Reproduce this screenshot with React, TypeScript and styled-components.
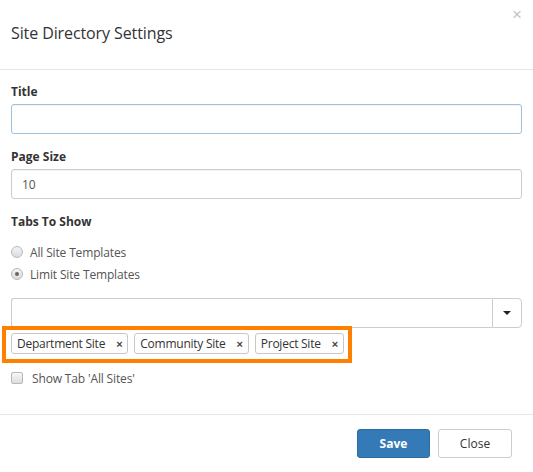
import React from "react";
import styled, { createGlobalStyle } from "styled-components";

const GlobalStyle = createGlobalStyle`
  html, body {
    margin: 0;
    padding: 0;
    background: #fff;
  }
  body {
    font-family: "Open Sans", "Liberation Sans", Arial, sans-serif;
    font-size: 12px;
    color: #333;
  }
  * {
    box-sizing: border-box;
  }
`

const Modal = styled.div`
  width: 533px;
  height: 472px;
  background: #fff;
  display: flex;
  flex-direction: column;
`

const Header = styled.div`
  position: relative;
  height: 70px;
  border-bottom: 1px solid #e5e5e5;
  display: flex;
  align-items: center;
  padding: 0 11px 3px;
`

const Heading = styled.h4`
  margin: 0;
  font-size: 16px;
  font-weight: 400;
  letter-spacing: -0.1px;
  color: #333;
`

const CloseX = styled.button`
  position: absolute;
  top: 6px;
  right: 11px;
  border: 0;
  background: none;
  padding: 0;
  font-size: 17px;
  line-height: 17px;
  color: #c4c4c4;
  font-family: "Liberation Sans", Arial, sans-serif;
  cursor: pointer;
`

const Body = styled.div`
  padding: 13px 11px 0 11px;
  height: 345px;
  border-bottom: 1px solid #e5e5e5;
`

const Field = styled.div`
  margin-bottom: 14px;
`

const Label = styled.label`
  display: block;
  font-weight: 700;
  font-size: 12px;
  line-height: 17px;
  margin-bottom: 4px;
  color: #333;
`

const TextInput = styled.input<{ $focused?: boolean }>`
  display: block;
  width: 100%;
  height: 30px;
  padding: 4px 10px;
  font-family: inherit;
  font-size: 12px;
  color: #555;
  border: 1px solid ${(p) => (p.$focused ? "#9fbfdc" : "#ccc")};
  border-radius: 3px;
  box-shadow: inset 0 1px 1px rgba(0, 0, 0, 0.05);
  outline: none;
`

const Options = styled.div`
  display: flex;
  flex-direction: column;
  margin-top: 11px;
`

const OptionRow = styled.label`
  display: flex;
  align-items: center;
  height: 22px;
  gap: 7px;
  color: #555;
  font-size: 12px;
  letter-spacing: -0.15px;
`

const Radio = styled.span<{ $checked?: boolean }>`
  width: 12px;
  height: 12px;
  border-radius: 50%;
  border: 1px solid #b8b8b8;
  background: linear-gradient(#f4f4f4, #dcdcdc);
  display: flex;
  align-items: center;
  justify-content: center;

  &::after {
    content: "";
    width: 4px;
    height: 4px;
    border-radius: 50%;
    background: ${(p) => (p.$checked ? "#666" : "transparent")};
  }
`

const Checkbox = styled.span`
  width: 12px;
  height: 12px;
  border-radius: 2px;
  border: 1px solid #b8b8b8;
  background: linear-gradient(#f6f6f6, #dedede);
`

const SelectRow = styled.div`
  display: flex;
  height: 30px;
  margin-top: 13px;
`

const SelectInput = styled.div`
  flex: 1;
  border: 1px solid #ccc;
  border-right: 0;
  border-radius: 3px 0 0 3px;
`

const SelectButton = styled.div`
  width: 30px;
  border: 1px solid #ccc;
  border-radius: 0 4px 4px 0;
  display: flex;
  align-items: center;
  justify-content: center;

  &::after {
    content: "";
    border-left: 4px solid transparent;
    border-right: 4px solid transparent;
    border-top: 4px solid #222;
  }
`

const Highlight = styled.div`
  display: inline-flex;
  gap: 6px;
  margin: -2px 0 0 -9px;
  padding: 3px 4px 5px 5px;
  border: 4px solid #ff8000;
`

const Tag = styled.span`
  display: inline-flex;
  align-items: center;
  height: 21px;
  padding: 0 5px;
  gap: 11px;
  border: 1px solid #c8c8c8;
  border-radius: 3px;
  font-size: 12px;
  letter-spacing: -0.25px;
  color: #333;
  background: #fff;
`

const TagRemove = styled.span`
  font-family: "Liberation Sans", Arial, sans-serif;
  font-size: 11px;
  font-weight: 700;
  color: #444;
`

const CheckRow = styled(OptionRow)`
  margin-top: 4px;
  gap: 9px;
`

const Footer = styled.div`
  display: flex;
  justify-content: flex-end;
  gap: 8px;
  padding: 14px 21px 0 0;
`

const Button = styled.button<{ $primary?: boolean }>`
  height: 29px;
  width: ${(p) => (p.$primary ? "73px" : "74px")};
  font-family: inherit;
  font-size: 12px;
  font-weight: ${(p) => (p.$primary ? 700 : 400)};
  border-radius: 3px;
  border: 1px solid ${(p) => (p.$primary ? "#2e6da4" : "#ccc")};
  background: ${(p) => (p.$primary ? "#337ab7" : "#fff")};
  color: ${(p) => (p.$primary ? "#fff" : "#333")};
  cursor: pointer;
`

const tags = ["Department Site", "Community Site", "Project Site"];

export default function App() {
  return (
    <>
      <GlobalStyle />
      <Modal>
        <Header>
          <Heading>Site Directory Settings</Heading>
          <CloseX>×</CloseX>
        </Header>
        <Body>
          <Field>
            <Label>Title</Label>
            <TextInput $focused defaultValue="" />
          </Field>
          <Field>
            <Label>Page Size</Label>
            <TextInput defaultValue="10" />
          </Field>
          <Label>Tabs To Show</Label>
          <Options>
            <OptionRow>
              <Radio />
              All Site Templates
            </OptionRow>
            <OptionRow>
              <Radio $checked />
              Limit Site Templates
            </OptionRow>
          </Options>
          <SelectRow>
            <SelectInput />
            <SelectButton />
          </SelectRow>
          <Highlight>
            {tags.map((t) => (
              <Tag key={t}>
                {t}
                <TagRemove>×</TagRemove>
              </Tag>
            ))}
          </Highlight>
          <CheckRow>
            <Checkbox />
            Show Tab 'All Sites'
          </CheckRow>
        </Body>
        <Footer>
          <Button $primary>Save</Button>
          <Button>Close</Button>
        </Footer>
      </Modal>
    </>
  );
}
